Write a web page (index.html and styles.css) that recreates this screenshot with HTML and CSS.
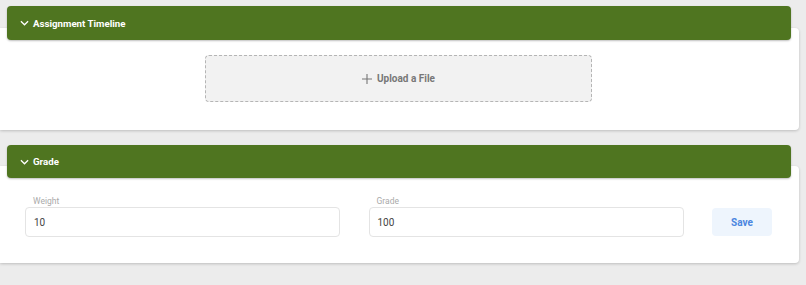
FILE: index.html
```html
<!DOCTYPE html>
<html>
<head>
<meta charset="utf-8">
<link rel="stylesheet" href="styles.css">
</head>
<body>
<div class="page">
  <section class="section">
    <div class="header">
      <svg class="chev" viewBox="0 0 10 6" width="9" height="6"><path d="M1 1 L5 5 L9 1" fill="none" stroke="#fff" stroke-width="1.4"/></svg>
      <span>Assignment Timeline</span>
    </div>
    <div class="card card-upload">
      <div class="upload">
        <svg class="plus" viewBox="0 0 10 10" width="10" height="10"><path d="M5 0 V10 M0 5 H10" stroke="#777" stroke-width="1.1"/></svg>
        <span>Upload a File</span>
      </div>
    </div>
  </section>
  <section class="section">
    <div class="header header-grade">
      <svg class="chev" viewBox="0 0 10 6" width="9" height="6"><path d="M1 1 L5 5 L9 1" fill="none" stroke="#fff" stroke-width="1.4"/></svg>
      <span>Grade</span>
    </div>
    <div class="card card-grade">
      <div class="field">
        <label class="label">Weight</label>
        <div class="input">10</div>
      </div>
      <div class="field">
        <label class="label">Grade</label>
        <div class="input">100</div>
      </div>
      <button class="save">Save</button>
    </div>
  </section>
</div>
</body>
</html>
```
FILE: styles.css
```css
html, body {
  margin: 0;
  padding: 0;
  background: #ececec;
  font-family: Roboto, "Liberation Sans", sans-serif;
}
.page {
  padding-top: 6px;
  width: 799px;
}
.section {
  margin-bottom: 15px;
}
.header {
  position: relative;
  z-index: 1;
  height: 34px;
  margin: 0 8px 0 7px;
  background: #4f7520;
  border-radius: 4px;
  box-shadow: 0 1px 2px rgba(0,0,0,0.25);
  display: flex;
  align-items: center;
  padding-left: 13px;
  color: #fff;
  font-weight: 700;
  font-size: 9.7px;
}
.header-grade {
  height: 33px;
}
.chev {
  margin-right: 4px;
}
.card {
  background: #fff;
  margin-top: -12px;
  border-radius: 0 4px 4px 0;
  box-shadow: 0 1px 3px rgba(0,0,0,0.2);
}
.card-upload {
  padding: 27px 0 28px;
}
.upload {
  width: 385px;
  height: 45px;
  margin: 0 auto;
  background: #f2f2f2;
  border: 1px dashed #b5b5b5;
  border-radius: 4px;
  display: flex;
  align-items: center;
  justify-content: center;
  color: #777;
  font-weight: 700;
  font-size: 10px;
  transform: translateX(-1px);
}
.plus {
  margin-right: 5px;
}
.card-grade {
  padding: 30px 27px 26px 25px;
  display: grid;
  grid-template-columns: 1fr 1fr 60px;
  column-gap: 28.5px;
  align-items: end;
}
.field {
  display: flex;
  flex-direction: column;
}
.label {
  font-size: 8.5px;
  color: #aaa;
  padding-left: 8px;
  margin-bottom: 1px;
}
.input {
  height: 28px;
  border: 1px solid #e4e4e4;
  border-radius: 4px;
  display: flex;
  align-items: center;
  padding-left: 8px;
  font-size: 10px;
  color: #444;
}
.save {
  height: 28px;
  margin-bottom: 1px;
  border: none;
  border-radius: 4px;
  background: #eef5fd;
  color: #4a86e0;
  font-family: Roboto, "Liberation Sans", sans-serif;
  font-weight: 700;
  font-size: 10px;
  padding: 0;
}
```
